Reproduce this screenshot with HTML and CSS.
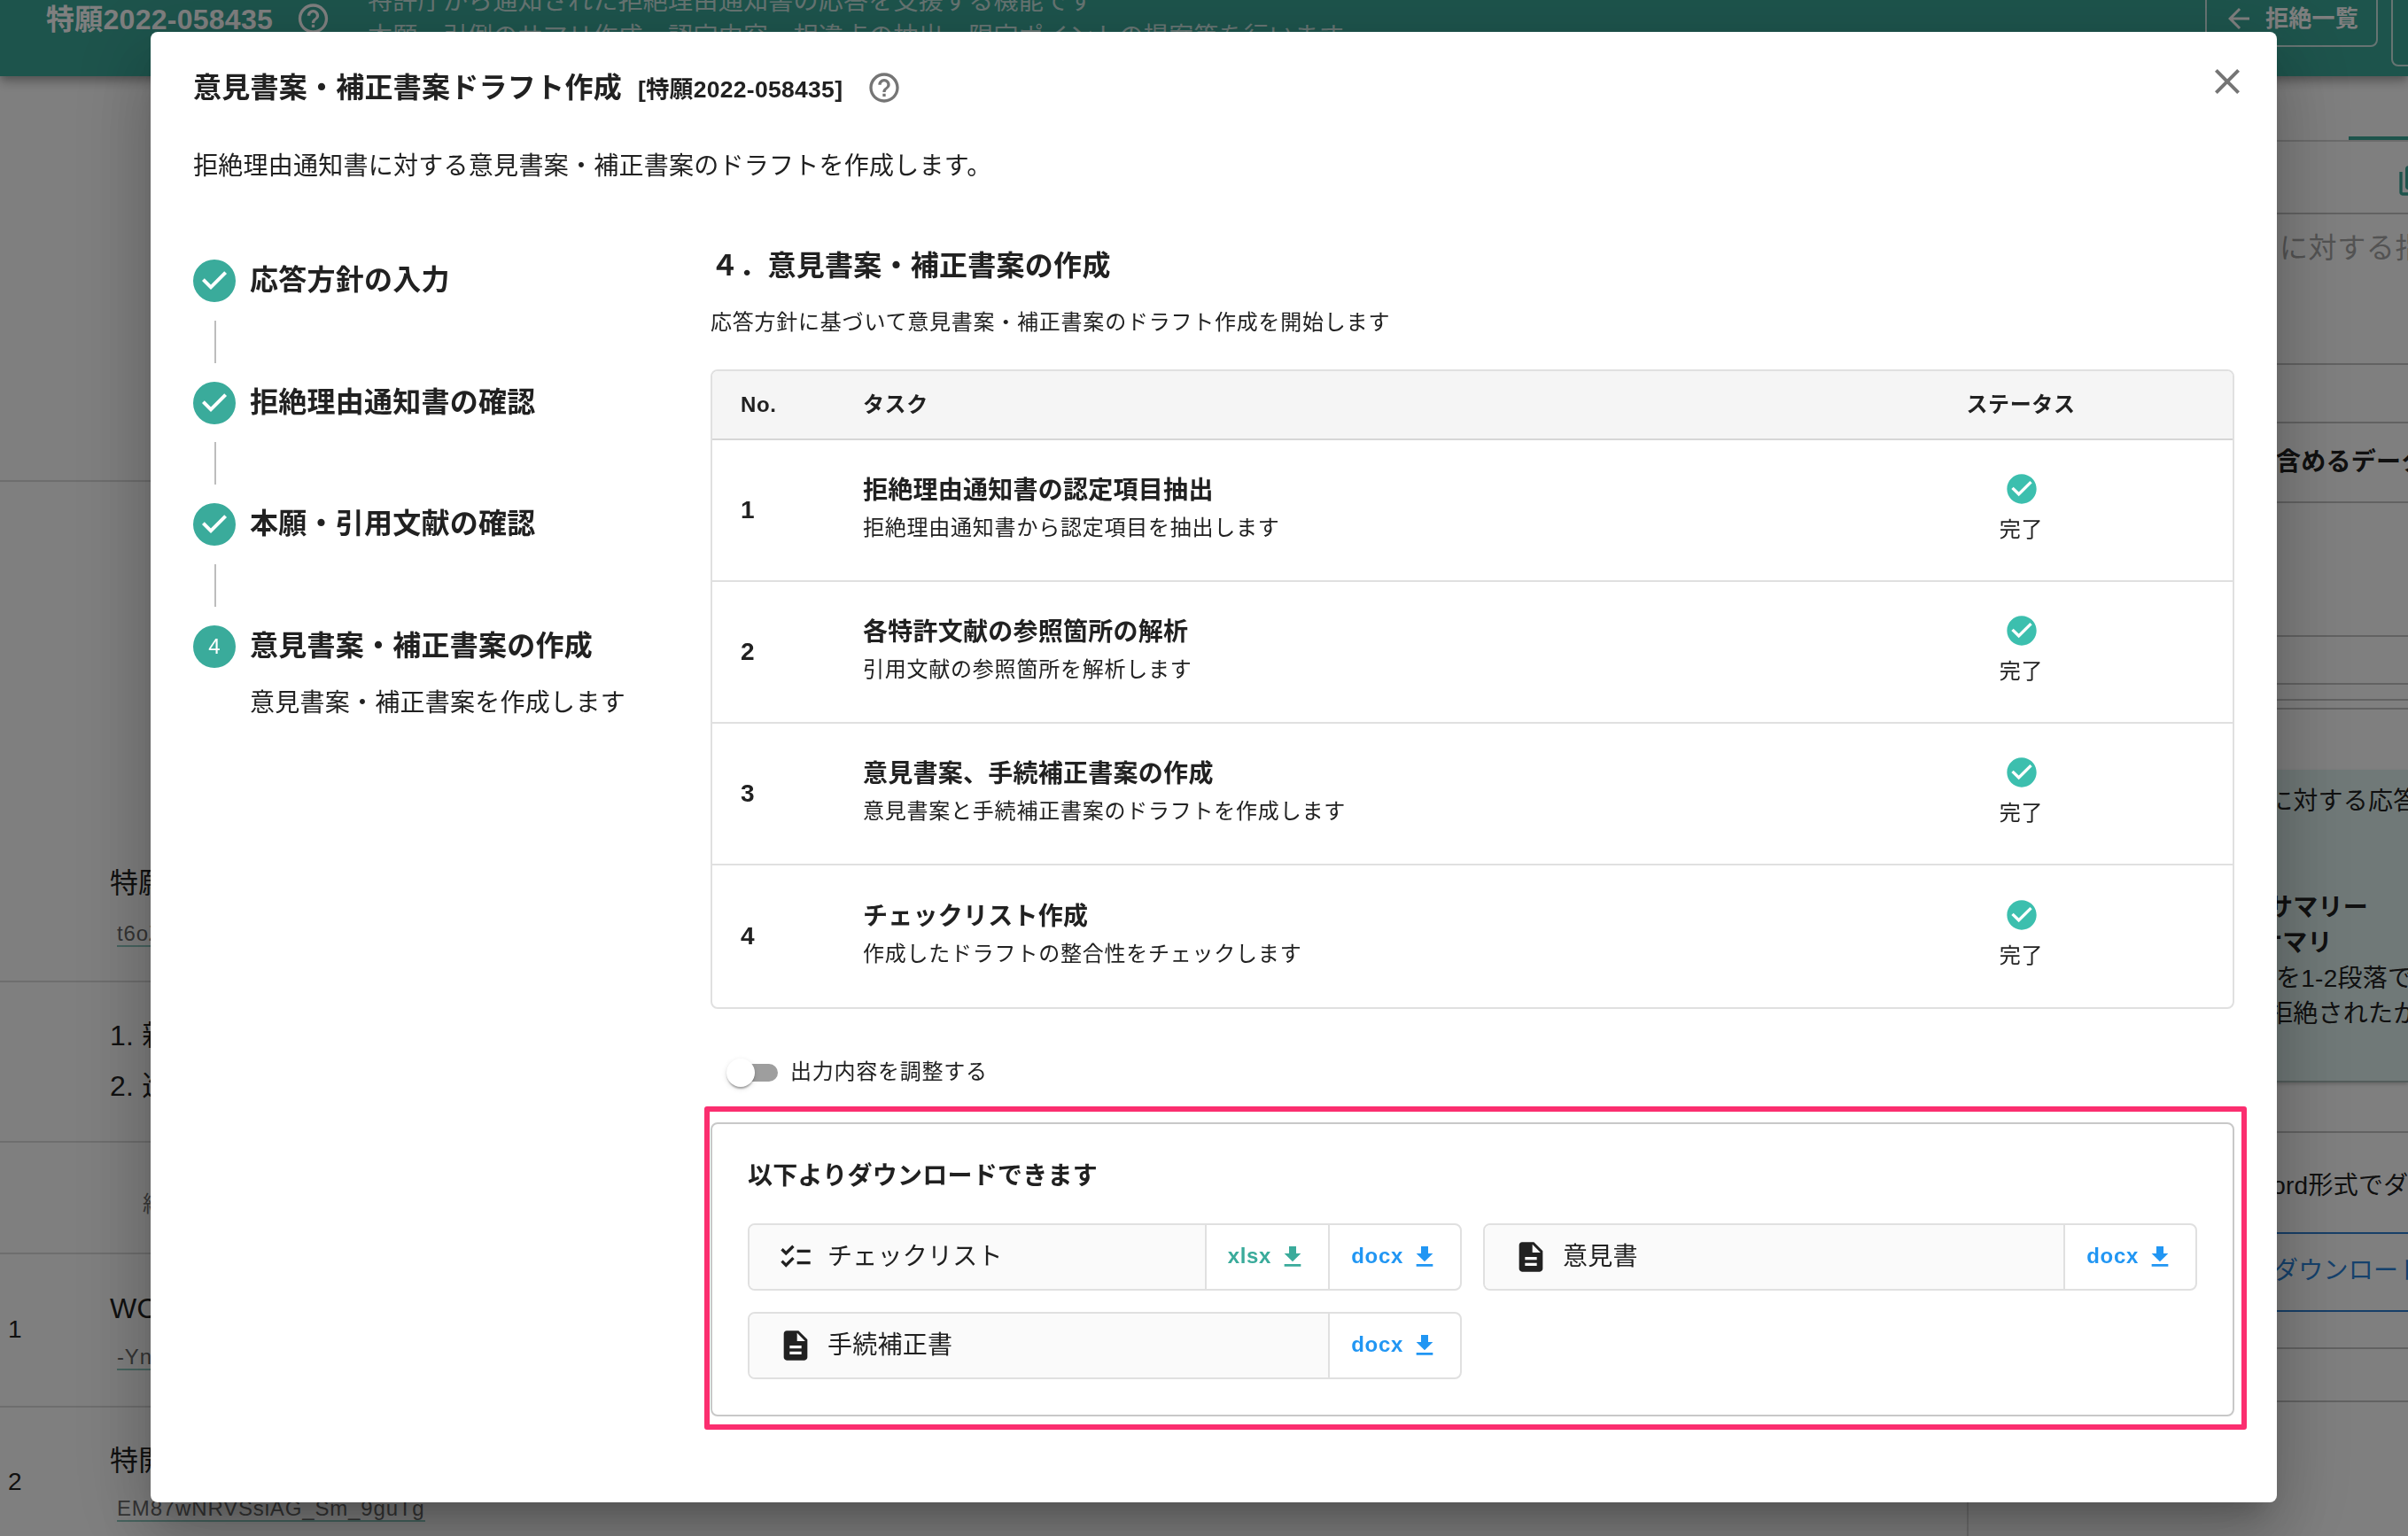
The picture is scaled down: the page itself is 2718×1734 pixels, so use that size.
FILE: index.html
```html
<!DOCTYPE html>
<html lang="ja">
<head>
<meta charset="utf-8">
<title>意見書案・補正書案ドラフト作成</title>
<link rel="stylesheet" href="styles.css">
</head>
<body>
<svg class="sprite" aria-hidden="true">
  <symbol id="i-help" viewBox="0 0 24 24"><path d="M11 18h2v-2h-2v2zm1-16C6.48 2 2 6.48 2 12s4.48 10 10 10 10-4.48 10-10S17.52 2 12 2zm0 18c-4.41 0-8-3.59-8-8s3.59-8 8-8 8 3.59 8 8-3.59 8-8 8zm0-14c-2.21 0-4 1.79-4 4h2c0-1.1.9-2 2-2s2 .9 2 2c0 2-3 1.75-3 5h2c0-2.25 3-2.5 3-5 0-2.21-1.79-4-4-4z"/></symbol>
  <symbol id="i-close" viewBox="0 0 24 24"><path d="M19 6.41 17.59 5 12 10.59 6.41 5 5 6.41 10.59 12 5 17.59 6.41 19 12 13.41 17.59 19 19 17.59 13.41 12z"/></symbol>
  <symbol id="i-step" viewBox="0 0 24 24"><path d="M12 0a12 12 0 1 0 0 24 12 12 0 0 0 0-24zm-2 17l-5-5 1.4-1.4 3.6 3.6 7.6-7.6L19 8l-9 9z"/></symbol>
  <symbol id="i-done" viewBox="0 0 24 24"><path d="M12 2C6.48 2 2 6.48 2 12s4.48 10 10 10 10-4.48 10-10S17.52 2 12 2zm-2 15-5-5 1.41-1.41L10 14.17l7.59-7.59L19 8l-9 9z"/></symbol>
  <symbol id="i-download" viewBox="0 0 24 24"><path d="M19 9h-4V3H9v6H5l7 7 7-7zM5 18v2h14v-2H5z"/></symbol>
  <symbol id="i-checklist" viewBox="0 0 24 24"><path d="M22 7h-9v2h9V7zm0 8h-9v2h9v-2zM5.54 11 2 7.46l1.41-1.41 2.12 2.12 4.24-4.24 1.41 1.41L5.54 11zm0 8L2 15.46l1.41-1.41 2.12 2.12 4.24-4.24 1.41 1.41L5.54 19z"/></symbol>
  <symbol id="i-doc" viewBox="0 0 24 24"><path d="M14 2H6c-1.1 0-1.99.9-1.99 2L4 20c0 1.1.89 2 1.99 2H18c1.1 0 2-.9 2-2V8l-6-6zm2 16H8v-2h8v2zm0-4H8v-2h8v2zm-3-5V3.5L18.5 9H13z"/></symbol>
  <symbol id="i-back" viewBox="0 0 24 24"><path d="M20 11H7.83l5.59-5.59L12 4l-8 8 8 8 1.41-1.41L7.83 13H20v-2z"/></symbol>
  <symbol id="i-copy" viewBox="0 0 24 24"><path d="M4 6H2v14c0 1.1.9 2 2 2h14v-2H4V6zm16-4H8c-1.100 0-2 .9-2 2v12c0 1.100.9 2 2 2h12c1.100 0 2-.9 2-2V4c0-1.100-.9-2-2-2z"/></symbol>
</svg>

<div class="page">
  <header class="appbar">
    <div class="appbar-title">特願2022-058435</div>
    <svg class="icon appbar-help"><use href="#i-help"/></svg>
    <div class="appbar-desc">
      <div>特許庁から通知された拒絶理由通知書の応答を支援する機能です</div>
      <div>本願、引例のサマリ作成、認定内容、相違点の抽出、限定ポイントの提案等を行います</div>
    </div>
    <div class="appbar-back"><svg class="icon"><use href="#i-back"/></svg>拒絶一覧</div>
    <div class="appbar-next"></div>
  </header>
  <div class="columns">
    <main class="content">
      <section class="r0"></section>
      <section class="r1"><p class="pub">特願</p><p class="id"><span>t6oZ</span></p></section>
      <section class="r2"><p>1. 新</p><p>2. 進</p></section>
      <section class="r3"><p>経</p></section>
      <section class="r4"><b>1</b><div><p class="pub">WO</p><p class="id"><span>-Yn</span></p></div></section>
      <section class="r5"><b>2</b><div><p class="pub">特開</p><p class="id"><span>EM87wNRVSsiAG_Sm_9guTg</span></p></div></section>
    </main>
    <aside class="panel">
      <div class="p-tabs"><i></i></div>
      <div class="p-tools"><svg class="icon"><use href="#i-copy"/></svg></div>
      <div class="p-input">に対する指</div>
      <div class="p-gap1"></div>
      <div class="p-data">含めるデータ</div>
      <div class="p-gap2"></div>
      <div class="p-gap3"></div>
      <div class="p-gap4"></div>
      <div class="p-gap5"></div>
      <div class="p-space"></div>
      <div class="p-answer">
        <p class="a1">に対する応答</p>
        <p class="a2">サマリー</p>
        <p class="a3">サマリ</p>
        <p class="a4">を1-2段落で</p>
        <p class="a5">拒絶されたか</p>
      </div>
      <div class="p-gap6"></div>
      <div class="p-word">Word形式でダ</div>
      <div class="p-dl">ダウンロード</div>
      <div class="p-gap7"></div>
      <div class="p-gap8"></div>
    </aside>
  </div>
</div>

<div class="backdrop">
  <div class="dialog" role="dialog">
    <div class="dialog-head">
      <h1>意見書案・補正書案ドラフト作成</h1>
      <span class="case">[特願2022-058435]</span>
      <svg class="icon help"><use href="#i-help"/></svg>
      <svg class="icon close"><use href="#i-close"/></svg>
    </div>
    <p class="lead">拒絶理由通知書に対する意見書案・補正書案のドラフトを作成します。</p>
    <div class="dialog-body">
      <nav class="stepper">
        <div class="step"><svg class="icon"><use href="#i-step"/></svg><span class="label">応答方針の入力</span></div>
        <div class="connector"></div>
        <div class="step"><svg class="icon"><use href="#i-step"/></svg><span class="label">拒絶理由通知書の確認</span></div>
        <div class="connector"></div>
        <div class="step"><svg class="icon"><use href="#i-step"/></svg><span class="label">本願・引用文献の確認</span></div>
        <div class="connector"></div>
        <div class="step"><span class="num">4</span><span class="label">意見書案・補正書案の作成</span></div>
        <p class="step-note">意見書案・補正書案を作成します</p>
      </nav>
      <section class="work">
        <h2>４．意見書案・補正書案の作成</h2>
        <p class="sub">応答方針に基づいて意見書案・補正書案のドラフト作成を開始します</p>
        <div class="table">
          <div class="tr th"><div>No.</div><div>タスク</div><div class="status">ステータス</div></div>
          <div class="tr"><div class="no">1</div><div class="body"><p class="task">拒絶理由通知書の認定項目抽出</p><p class="note">拒絶理由通知書から認定項目を抽出します</p></div><div class="status"><svg class="icon"><use href="#i-done"/></svg><p>完了</p></div></div>
          <div class="tr"><div class="no">2</div><div class="body"><p class="task">各特許文献の参照箇所の解析</p><p class="note">引用文献の参照箇所を解析します</p></div><div class="status"><svg class="icon"><use href="#i-done"/></svg><p>完了</p></div></div>
          <div class="tr"><div class="no">3</div><div class="body"><p class="task">意見書案、手続補正書案の作成</p><p class="note">意見書案と手続補正書案のドラフトを作成します</p></div><div class="status"><svg class="icon"><use href="#i-done"/></svg><p>完了</p></div></div>
          <div class="tr"><div class="no">4</div><div class="body"><p class="task">チェックリスト作成</p><p class="note">作成したドラフトの整合性をチェックします</p></div><div class="status"><svg class="icon"><use href="#i-done"/></svg><p>完了</p></div></div>
        </div>
        <div class="toggle-row"><span class="switch"><span class="track"></span><span class="thumb"></span></span><span class="label">出力内容を調整する</span></div>
        <div class="downloads">
          <h3>以下よりダウンロードできます</h3>
          <div class="files">
            <div class="file"><div class="name"><svg class="icon"><use href="#i-checklist"/></svg>チェックリスト</div><div class="btn xlsx"><span class="label">xlsx</span><svg class="icon"><use href="#i-download"/></svg></div><div class="btn"><span class="label">docx</span><svg class="icon"><use href="#i-download"/></svg></div></div>
            <div class="file"><div class="name"><svg class="icon"><use href="#i-doc"/></svg>意見書</div><div class="btn"><span class="label">docx</span><svg class="icon"><use href="#i-download"/></svg></div></div>
            <div class="file"><div class="name"><svg class="icon"><use href="#i-doc"/></svg>手続補正書</div><div class="btn"><span class="label">docx</span><svg class="icon"><use href="#i-download"/></svg></div></div>
          </div>
          <div class="highlight"></div>
        </div>
      </section>
    </div>
  </div>
</div>
</body>
</html>
```

FILE: styles.css
```css
* { box-sizing: border-box; margin: 0; padding: 0; }
html, body { height: 1734px; overflow: hidden; }
body {
  font-family: "Liberation Sans", "Noto Sans CJK JP", sans-serif;
  font-size: 28px;
  line-height: 40px;
  letter-spacing: .26px;
  color: #212121;
  background: #fff;
  white-space: nowrap;
}
.sprite { display: none; }
.icon { display: block; flex: none; width: 40px; height: 40px; fill: currentColor; }

/* Page behind the dialog */
.page { position: relative; z-index: 0; height: 1734px; overflow: hidden; display: flex; flex-direction: column; }
.appbar {
  flex: none; height: 86px; display: flex; align-items: flex-start; padding-left: 52px;
  background: #3ba899; color: #fff; z-index: 1;
  box-shadow: 0 4px 8px -2px rgba(0,0,0,.2), 0 8px 10px rgba(0,0,0,.14), 0 2px 20px rgba(0,0,0,.12);
}
.appbar-title { font-size: 32px; font-weight: 700; line-height: 44px; width: 281px; }
.appbar-help { margin-top: 1px; width: 41px; }
.appbar-desc { flex: 1; margin: -18px 0 0 41px; color: rgba(255,255,255,.75); }
.appbar-back {
  width: 195px; height: 64px; margin-top: -11px; padding-left: 18px;
  border: 2px solid rgba(255,255,255,.75); border-radius: 8px;
  display: flex; align-items: center; gap: 12px;
  font-size: 26px; font-weight: 700;
}
.appbar-back .icon { width: 36px; height: 36px; }
.appbar-next { width: 60px; height: 108px; margin: -33px -41px 0 15px; border: 2px solid rgba(255,255,255,.75); border-radius: 8px; }
.columns { flex: 1; display: flex; min-height: 0; }
.content { width: 2220px; font-size: 32px; }
.content section { border-bottom: 2px solid #dcdcdc; padding-left: 124px; }
.content b { font-weight: 400; font-size: 28px; }
.id { font-size: 24px; line-height: 36px; letter-spacing: .84px; color: #6a6a6a; padding-left: 8px; }
.id span { display: inline-block; line-height: 26px; border-bottom: 2px solid #8fc9c0; }
.content .r0 { height: 458px; }
.content .r1 { height: 565px; padding-top: 433px; }
.r1 .id { margin-top: 19px; }
.content .r2 { height: 181px; padding-top: 32px; line-height: 57px; }
.content .r3 { height: 126px; padding: 49px 0 0 161px; font-size: 25px; color: #757575; }
.content .r4 { height: 173px; display: flex; padding: 41px 0 0 9px; }
.r4 b, .r5 b { width: 115px; padding-top: 24px; }
.r4 .id { margin-top: 17px; }
.content .r5 { height: 173px; display: flex; padding: 40px 0 0 9px; border: 0; }
.r5 .id { margin-top: 16px; }

.panel { flex: 1; border-left: 2px solid #dcdcdc; overflow: hidden; }
.panel > div { border-bottom: 2px solid #c4c4c4; }
.panel > .p-tabs { height: 74px; border-color: #d6d6d6; padding: 68px 0 0 429px; }
.p-tabs i { display: block; height: 4px; background: #3ba899; }
.p-tools { height: 82px; padding: 24px 0 0 483px; color: #3ba899; }
.p-input { height: 170px; padding: 18px 0 0 351px; font-size: 32px; letter-spacing: .6px; color: #a6a6a6; }
.p-gap1 { height: 66px; }
.p-data { height: 90px; padding: 24px 0 0 347px; font-weight: 700; }
.p-gap2 { height: 151px; }
.p-gap3 { height: 54px; }
.p-gap4 { height: 18px; }
.p-gap5 { height: 10px; }
.panel > .p-space { height: 68px; border: 0; }
.panel > .p-answer { height: 353px; padding: 16px 0 0 338px; background: #e0f2f0; border-color: #a9bbb8; box-shadow: 0 2px 4px rgba(0,0,0,.2); }
.p-answer .a2, .p-answer .a3 { font-weight: 700; }
.a2 { margin-top: 80px; }
.a3 { margin-left: -12px; }
.a4 { margin-left: 9px; }
.p-gap6 { height: 57px; }
.panel > .p-word { height: 114px; padding: 40px 0 0 316px; border-color: #2f7fd0; }
.panel > .p-dl { height: 88px; padding: 22px 0 0 344px; color: #2b83d8; border-color: #2f7fd0; }
.p-gap7 { height: 42px; }
.p-gap8 { height: 60px; }

/* Dialog */
.backdrop { position: fixed; z-index: 10; inset: 0; padding: 36px 148px 38px 170px; background: rgba(0,0,0,.5); }
.dialog {
  height: 1660px; padding: 31px 48px 0; background: #fff; border-radius: 8px;
  box-shadow: 0 22px 30px -14px rgba(0,0,0,.2), 0 48px 76px 6px rgba(0,0,0,.14), 0 18px 92px 16px rgba(0,0,0,.12);
}
.dialog-head { height: 64px; display: flex; align-items: center; }
h1 { font-size: 32px; }
.case { font-size: 26.500px; font-weight: 700; letter-spacing: .3px; margin: 4px 0 0 18px; }
.help { margin: 0 0 0 27px; color: #757575; }
.close { width: 48px; height: 48px; margin: -14px -16px 0 auto; color: #757575; }
.lead { margin-top: 37px; }
.dialog-body { display: flex; }
.stepper { width: 584px; padding-top: 64px; }
.step { height: 89.700px; display: flex; align-items: center; gap: 16px; font-size: 32px; font-weight: 700; }
.step .label { padding-bottom: 2px; }
.step .icon { width: 48px; height: 48px; color: #3aab9b; }
.num { width: 48px; height: 48px; border-radius: 50%; background: #3aab9b; color: #fff; font-size: 24px; font-weight: 400; line-height: 48px; text-align: center; letter-spacing: 0; }
.connector { width: 2px; height: 48px; margin-left: 24px; background: #bdbdbd; }
.step-note { margin: -1px 0 0 64px; }
.work { flex: 1; padding-top: 68px; }
h2 { font-size: 32px; line-height: 48px; }
.sub { margin-top: 20px; font-size: 24px; letter-spacing: .77px; }
.table { margin-top: 33px; border: 2px solid #e0e0e0; border-radius: 8px; overflow: hidden; }
.tr { display: grid; grid-template-columns: 138px 1fr 478px; align-items: center; height: 160px; border-bottom: 2px solid #e0e0e0; }
.tr:last-child { border-bottom: 0; }
.tr > div { padding-left: 32px; }
.tr > .body { padding-bottom: 2px; }
.tr > .status { padding: 0; display: flex; flex-direction: column; align-items: center; }
.tr:not(.th) > .status { padding: 0 0 2px 1px; }
.th { height: 78px; background: #f5f5f5; border-color: #d6d6d6; font-size: 24px; font-weight: 700; letter-spacing: .6px; }
.no, .task { font-weight: 700; }
.note { margin-top: 2px; font-size: 24px; letter-spacing: .77px; }
.status .icon { color: #3cbfae; margin-top: -1px; }
.status p { font-size: 24px; letter-spacing: .77px; margin-top: 6px; }
.toggle-row { margin-top: 48px; height: 48px; padding-left: 10px; display: flex; align-items: center; font-size: 24px; letter-spacing: .75px; }
.toggle-row .label { padding-bottom: 3px; }
.switch { position: relative; width: 80px; height: 48px; padding: 14px; }
.track { display: block; width: 52px; height: 20px; border-radius: 10px; background: #9e9e9e; }
.thumb { position: absolute; left: 8px; top: 8px; width: 32px; height: 32px; border-radius: 50%; background: #fff; box-shadow: 0 4px 2px -2px rgba(0,0,0,.2), 0 2px 2px rgba(0,0,0,.14), 0 2px 6px rgba(0,0,0,.12); }
.downloads { position: relative; margin-top: 32px; height: 332px; padding: 39px 40px 0; border: 2px solid #c8c8c8; border-radius: 8px; }
h3 { font-size: 28px; line-height: 40px; }
.files { margin-top: 33px; display: grid; grid-template-columns: 1fr 1fr; gap: 24px; }
.file { height: 76px; display: flex; border: 2px solid #e0e0e0; border-radius: 8px; overflow: hidden; }
.name { flex: 1; display: flex; align-items: center; gap: 16px; padding-left: 32px; background: #fafafa; }
.btn { display: flex; align-items: center; gap: 8px; padding: 0 24px; border-left: 2px solid #e0e0e0; font-size: 24px; font-weight: 700; letter-spacing: .7px; color: #2196f3; }
.btn .label { padding-bottom: 2px; }
.btn.xlsx { color: #3aab9b; }
.btn .icon { width: 32px; height: 32px; }
.highlight { position: absolute; left: -9px; right: -16px; top: -20px; bottom: -17px; border: 6px solid #fb2e6f; border-radius: 3px; }
```
